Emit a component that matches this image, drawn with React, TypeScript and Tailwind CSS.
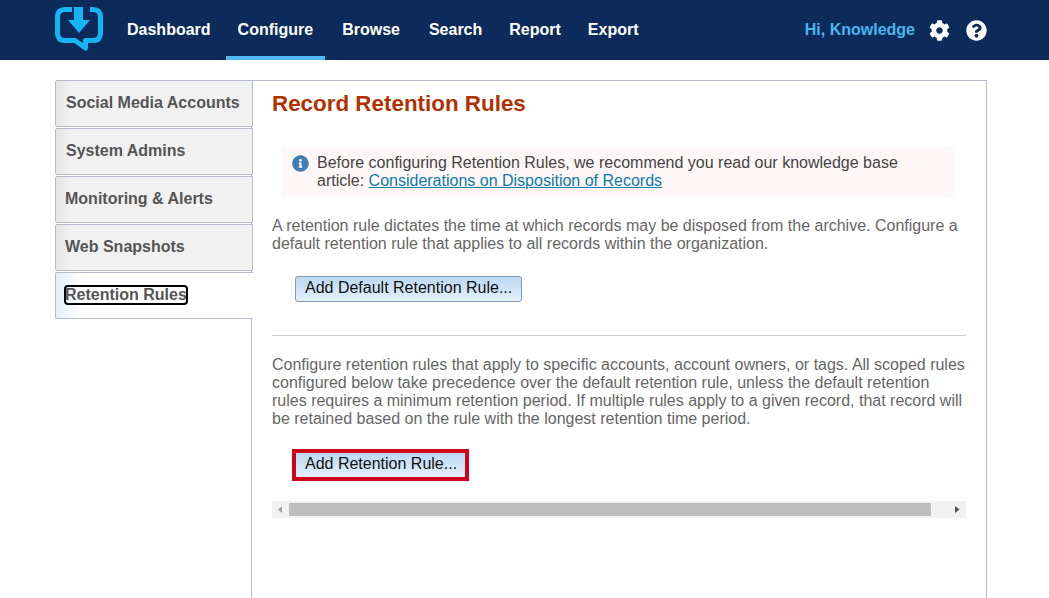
import { FaCog, FaQuestionCircle, FaInfoCircle } from "react-icons/fa";

const navItems = [
  { label: "Dashboard", cls: "pl-[12px] pr-[11px]" },
  { label: "Configure", cls: "px-[12px] border-b-4 border-[#4fb8f5] pt-[4px]" },
  { label: "Browse", cls: "pl-[13px] pr-[12px]" },
  { label: "Search", cls: "pl-[13px] pr-[11px]" },
  { label: "Report", cls: "pl-[12px] pr-[11px]" },
  { label: "Export", cls: "px-[12px]" },
];
const tabs = [
  { label: "Social Media Accounts", pad: "pl-[10px]" },
  { label: "System Admins", pad: "pl-[10px]" },
  { label: "Monitoring & Alerts", pad: "pl-[9px]" },
  { label: "Web Snapshots", pad: "pl-[9px]" },
];

function Logo() {
  return (
    <svg width="50" height="48" viewBox="0 0 50 48" className="shrink-0">
      <path
        d="M18 3.500H11Q3.500 3.500 3.500 11V27Q3.500 34.500 11 34.500H21L31.500 42V34.500H39Q46.500 34.500 46.500 27V11Q46.500 3.500 39 3.500H36"
        fill="none"
        stroke="#14b4f5"
        strokeWidth="5"
        strokeLinejoin="round"
      />
      <path d="M20 1H29V14H36L25 27L14 14H20Z" fill="#14b4f5" />
    </svg>
  );
}

export default function App() {
  return (
    <div className="h-[598px] w-[1049px] overflow-hidden bg-white font-['Liberation_Sans',Arial,sans-serif]">
      <header className="flex h-[60px] items-stretch bg-[#0c2b5a] pl-[54px]">
        <div className="flex items-center py-[6px]"><Logo /></div>
        <nav className="ml-[11px] flex gap-[4px]">
          {navItems.map((n) => (
            <a key={n.label} className={`flex items-center text-[16px] font-bold text-white ${n.cls}`}>
              {n.label}
            </a>
          ))}
        </nav>
        <div className="ml-auto flex items-center pr-[62px]">
          <span className="text-[16px] font-bold text-[#4cb4f0]">Hi, Knowledge</span>
          <FaCog className="ml-[14px] text-white" size={21} />
          <FaQuestionCircle className="ml-[16px] text-white" size={21} />
        </div>
      </header>

      <main className="ml-[55px] mt-[20px] flex h-[520px] w-[932px] items-stretch">
        <div className="relative z-10 -mr-[2px] flex w-[198px] shrink-0 flex-col gap-[1px]">
          {tabs.map((t) => (
            <div
              key={t.label}
              className={`flex h-[47px] items-center rounded-l-[2px] border border-[#b4bccb] bg-[linear-gradient(90deg,#e4e4e4_0,#f1f1f1_14px,#f1f1f1_100%)] pb-[1px] ${t.pad} text-[16px] font-bold text-[#555555]`}
            >
              {t.label}
            </div>
          ))}
          <div className="flex h-[47px] items-center rounded-l-[2px] border border-r-0 border-[#b4bccb] bg-[linear-gradient(90deg,#e2effc_0,#ffffff_26px)] pb-[1px] pl-[9px] text-[16px] font-bold text-[#555555]">
            <span className="rounded-[3px] leading-[18px] outline-2 outline-offset-[-1px] outline-[#000000]">Retention Rules</span>
          </div>
        </div>

        <section className="flex-1 border border-b-0 border-[#b4bccb] px-[20px]">
          <h1 className="mt-[10px] text-[22.4px] font-bold leading-[26px] text-[#b23000]">Record Retention Rules</h1>

          <div className="ml-[10px] mt-[30px] flex h-[50px] w-[673px] items-start bg-[#fdf8f7] pl-[10px] pt-[7px] text-[16px] leading-[18px] text-[#444444]">
            <FaInfoCircle className="mr-[8px] mt-[1px] shrink-0 text-[#3e7cb1]" size={17} />
            <p>
              Before configuring Retention Rules, we recommend you read our knowledge base
              <br />
              article: <a className="text-[#0e7aa8] underline">Considerations on Disposition of Records</a>
            </p>
          </div>

          <p className="mt-[20px] w-[694px] text-[16px] leading-[18px] text-[#666666]">
            A retention rule dictates the time at which records may be disposed from the archive. Configure a default retention rule that applies to all records within the organization.
          </p>

          <button className="ml-[23px] mt-[23px] flex h-[26px] w-[227px] items-center rounded-[3px] border border-[#7f9db9] bg-[linear-gradient(180deg,#bcd8f4,#e4f0fb)] pb-[2px] pl-[9px] text-[16px] text-[#111111]">
            Add Default Retention Rule...
          </button>

          <hr className="mt-[33px] w-[694px] border-t border-[#cccccc]" />

          <p className="mt-[20px] w-[694px] text-[16px] leading-[18px] text-[#666666]">
            Configure retention rules that apply to specific accounts, account owners, or tags. All scoped rules configured below take precedence over the default retention rule, unless the default retention rules requires a minimum retention period. If multiple rules apply to a given record, that record will be retained based on the rule with the longest retention time period.
          </p>

          <button className="ml-[20px] mt-[21px] flex h-[32px] w-[177px] items-center border-4 border-[#d0021b] bg-[linear-gradient(180deg,#bcd8f4,#e4f0fb)] pb-[3px] pl-[9px] text-[16px] text-[#111111]">
            Add Retention Rule...
          </button>

          <div className="mt-[20px] flex h-[17px] w-[694px] items-center bg-[#f1f1f1]">
            <svg width="17" height="17" viewBox="0 0 17 17" className="shrink-0">
              <path d="M10 5V12L6 8.500Z" fill="#a3a3a3" />
            </svg>
            <div className="h-[13px] w-[642px] bg-[#bebebe]" />
            <div className="flex-1" />
            <svg width="17" height="17" viewBox="0 0 17 17" className="shrink-0">
              <path d="M6 5V12L10.500 8.500Z" fill="#505050" />
            </svg>
          </div>
        </section>
      </main>
    </div>
  );
}
